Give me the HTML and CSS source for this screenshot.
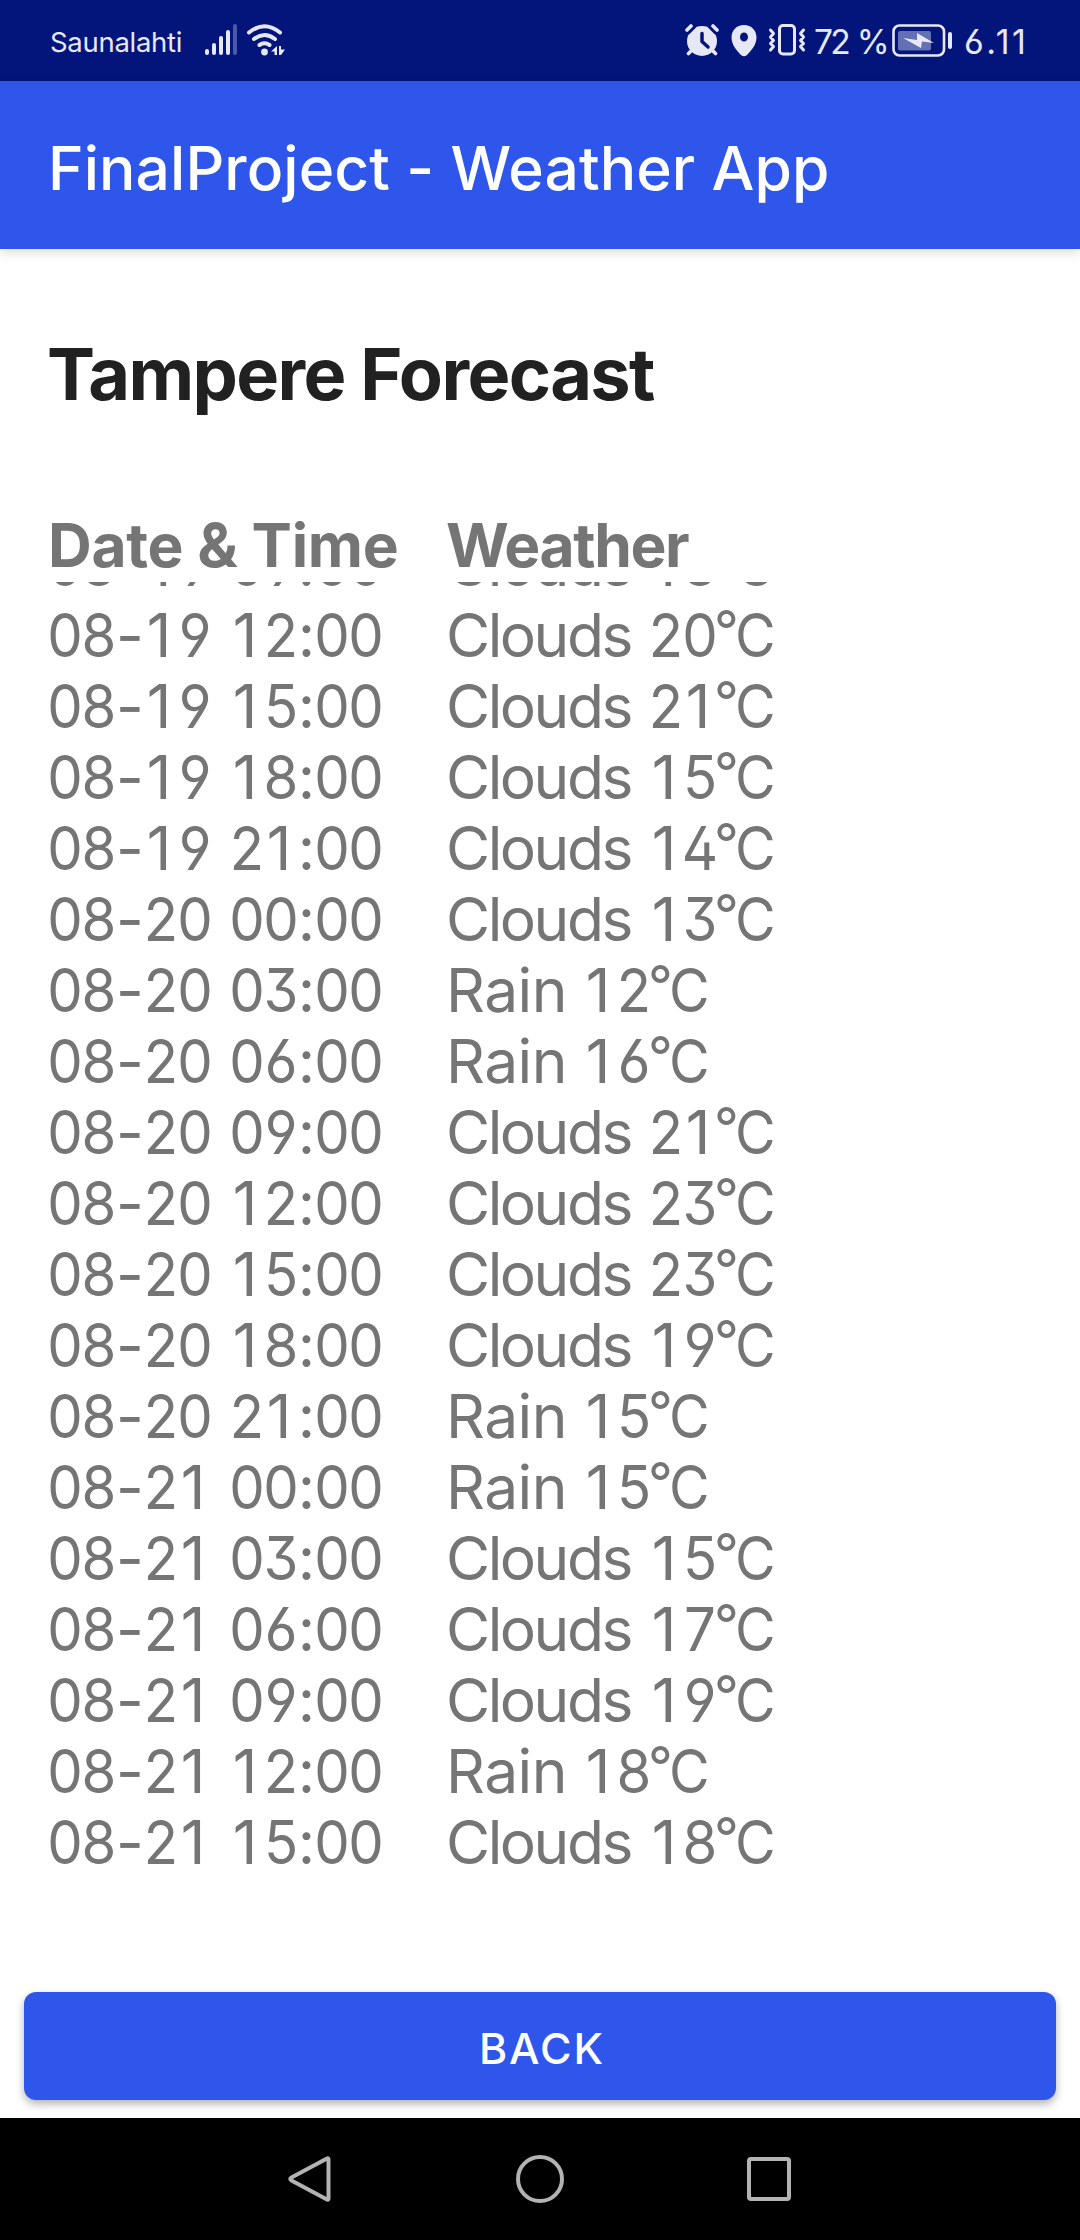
FILE: index.html
```html
<!DOCTYPE html>
<html lang="en">
<head>
<meta charset="utf-8">
<title>FinalProject - Weather App</title>
<link rel="stylesheet" href="styles.css">
</head>
<body>
<header class="status">
  <span class="carrier">Saunalahti</span>
  <svg class="signal" width="34" height="32" viewBox="0 0 34 32">
    <g fill="#e6e8f6"><rect x="1" y="25" width="4" height="6" rx="2"/><rect x="8" y="19" width="4" height="12" rx="2"/><rect x="15" y="12" width="4" height="19" rx="2"/><rect x="22" y="6" width="4" height="25" rx="2"/></g>
    <rect x="29" y="0" width="4" height="31" rx="2" fill="#4b57a8"/>
  </svg>
  <svg class="wifi" width="40" height="32" viewBox="0 0 40 32">
    <g fill="none" stroke="#e6e8f6" stroke-width="4" stroke-linecap="round"><path d="M3 8.500Q18.500-4 34 8.500M8 15Q18.500 7 29 15M13.500 21Q18.500 17.500 23.500 21"/></g>
    <circle cx="18.500" cy="28" r="3.400" fill="#e6e8f6"/>
    <path d="M31 22v9h-2.500v-3.500H25zM33 31v-9h2v3.500h4L35 31z" fill="#e6e8f6"/>
  </svg>
  <span class="spacer"></span>
  <svg class="alarm" width="34" height="32" viewBox="0 0 34 32">
    <circle cx="17" cy="17" r="15" fill="#e6e8f6"/>
    <path d="M2 7l5-5M32 7l-5-5" stroke="#03147a" stroke-width="8" stroke-linecap="round"/>
    <path d="M2 6l4-4M32 6l-4-4M6 27l-2.500 2.500M28 27l2.500 2.500" stroke="#e6e8f6" stroke-width="3.600" stroke-linecap="round"/>
    <path d="M17 9.500v8l6 5.500" fill="none" stroke="#03147a" stroke-width="3.500" stroke-linecap="round" stroke-linejoin="round"/>
  </svg>
  <svg class="pin" width="26" height="32" viewBox="0 0 26 32"><path fill="#e6e8f6" fill-rule="evenodd" d="M13 0C5.500 0 .5 5.500.5 12.500c0 7 5 13 9.500 17.500q3 2.500 6 0c4.500-4.500 9.500-10.500 9.500-17.500C25.500 5.500 20.500 0 13 0zm0 7.500a4 4.500 0 1 1 0 9 4 4.500 0 0 1 0-9z"/></svg>
  <svg class="vibrate" width="38" height="32" viewBox="0 0 38 32"><g fill="none" stroke="#e6e8f6" stroke-width="3" stroke-linecap="round" stroke-linejoin="round"><rect x="11.500" y="1.500" width="15" height="28.500" rx="3.500"/><path d="M2.500 6l3 3.500-3 3.500 3 3.500-3 3 3 3-3 3.500M35.500 6l-3 3.500 3 3.500-3 3.500 3 3-3 3 3 3.500"/></g></svg>
  <span class="percent">72 %</span>
  <svg class="battery" width="61" height="33" viewBox="0 0 61 33">
    <rect x="1.500" y="1.500" width="50.500" height="30" rx="6" fill="none" stroke="#e6e8f6" stroke-width="2.600"/>
    <rect x="6" y="7" width="33" height="19.500" rx="2" fill="#6470b5"/>
    <path d="M11 14l14 2V9l17 10-12-1.500-1 6.500z" fill="#e6e8f6"/>
    <rect x="56" y="8" width="4" height="17" rx="2" fill="#e6e8f6"/>
  </svg>
  <span class="clock">6.11</span>
</header>
<div class="toolbar"><span class="app-title">FinalProject - Weather App</span></div>
<main class="content">
  <h1>Tampere Forecast</h1>
  <div class="heads"><span class="head-date">Date &amp; Time</span><span class="head-weather">Weather</span></div>
  <div class="list" id="list"></div>
  <button class="back">BACK</button>
</main>
<nav class="navbar">
  <svg width="50" height="50" viewBox="0 0 50 50"><path d="M42.500 5.500v39q0 2-2 .8L5.500 26.500q-2.500-1.500 0-3L40.500 4.700q2-1.200 2 .8z"/></svg>
  <svg width="50" height="50" viewBox="0 0 50 50"><circle cx="25" cy="25" r="22"/></svg>
  <svg width="50" height="50" viewBox="0 0 50 50"><rect x="5" y="5" width="40" height="40" rx="2"/></svg>
</nav>
<script src="rows.js"></script>
</body>
</html>
```
FILE: rows.js
```js
const forecast = [
  ["08-19 09:00", "Clouds", "18"], ["08-19 12:00", "Clouds", "20"], ["08-19 15:00", "Clouds", "21"],
  ["08-19 18:00", "Clouds", "15"], ["08-19 21:00", "Clouds", "14"], ["08-20 00:00", "Clouds", "13"],
  ["08-20 03:00", "Rain", "12"], ["08-20 06:00", "Rain", "16"], ["08-20 09:00", "Clouds", "21"],
  ["08-20 12:00", "Clouds", "23"], ["08-20 15:00", "Clouds", "23"], ["08-20 18:00", "Clouds", "19"],
  ["08-20 21:00", "Rain", "15"], ["08-21 00:00", "Rain", "15"], ["08-21 03:00", "Clouds", "15"],
  ["08-21 06:00", "Clouds", "17"], ["08-21 09:00", "Clouds", "19"], ["08-21 12:00", "Rain", "18"],
  ["08-21 15:00", "Clouds", "18"]
];
// Each figure and separator sits in a fixed-width cell so the columns line up.
const kinds = { "-": "dash", " ": "space", ":": "colon", "°": "deg", "1": "digit one" };
const cells = s => [...s].map(c => `<span class="${kinds[c] || "digit"}">${c}</span>`).join("");
document.getElementById("list").innerHTML = forecast.map(([when, sky, temp]) =>
  `<div class="row"><span class="when">${cells(when)}</span><span class="${sky.toLowerCase()}">${sky}</span>${cells(" " + temp + "°")}<span class="unit">C</span></div>`
).join("");
```
FILE: styles.css
```css
* { box-sizing: border-box; }
body {
  margin: 0;
  height: 2240px;
  display: flex;
  flex-direction: column;
  background: #fff;
  font-family: Inter, "Open Sans", sans-serif;
  font-feature-settings: "ss01", "cv03", "cv04";
  white-space: nowrap;
  overflow: hidden;
}
svg { flex: none; display: block; }

.status {
  height: 81px;
  flex: none;
  display: flex;
  align-items: flex-start;
  padding: 24px 0 0 50px;
  background: #03147a;
  color: #e6e8f6;
}
.carrier { width: 154px; font-size: 27.500px; line-height: 37px; letter-spacing: -0.300px; }
.wifi { margin-left: 8px; }
.spacer { flex: 1; }
.pin { margin: 1px 0 0 12px; }
.vibrate { margin: 0 8px 0 11px; }
.percent { width: 78px; font-size: 33.500px; line-height: 36px; letter-spacing: -2.700px; word-spacing: 2px; }
.clock { width: 127px; padding-left: 11px; font-size: 34px; line-height: 36px; letter-spacing: 2.500px; }

.toolbar {
  height: 168px;
  flex: none;
  display: flex;
  align-items: center;
  padding: 6px 48px 0;
  background: #2f56eb;
  color: #fff;
  box-shadow: 0 4px 10px rgba(0, 0, 0, 0.130);
}
.app-title { font-size: 60.500px; font-weight: 500; letter-spacing: 0.100px; }

.content { flex: 1; display: flex; flex-direction: column; padding: 0 24px; color: #757575; }
h1 {
  margin: 80px 23px 0;
  height: 90px;
  line-height: 90px;
  font-size: 72px;
  font-weight: 700;
  letter-spacing: -1.600px;
  color: #212121;
}
.heads {
  display: flex;
  margin: 91px 24px 0;
  height: 72px;
  line-height: 71px;
  font-size: 60.500px;
  font-weight: 700;
}
.head-date { width: 398px; letter-spacing: -0.300px; }
.head-weather { letter-spacing: -1.400px; }
.list {
  height: 1304px;
  display: flex;
  flex-direction: column;
  justify-content: flex-end;
  overflow: hidden;
  padding: 0 24px 8px;
  font-size: 60.500px;
}
.row { display: flex; flex: none; height: 71px; line-height: 71px; }
.when { display: flex; width: 398px; }
.digit, .dash, .space, .colon, .deg { display: flex; flex: none; justify-content: center; }
.digit { width: 34px; transform: scaleX(0.930); }
.one { padding-right: 4px; transform: none; }
.dash { width: 28px; }
.space { width: 18px; }
.colon { width: 17px; }
.deg { width: 19px; transform: translateY(-5px) scale(0.900); }
.clouds { width: 185px; letter-spacing: -2.500px; }
.rain { width: 119px; letter-spacing: -0.500px; }
.unit { margin-left: -1px; transform: scaleX(0.920); transform-origin: left; }

.back {
  margin: 106px 0 0;
  height: 108px;
  border: 0;
  border-radius: 12px;
  background: #2f56eb;
  color: #fff;
  font: 500 43px/1 Inter, "Open Sans", sans-serif;
  letter-spacing: 2px;
  padding: 4px 0 0 4px;
  box-shadow: 0 4px 9px rgba(0, 0, 0, 0.300);
}
.navbar {
  height: 122px;
  flex: none;
  display: flex;
  justify-content: center;
  align-items: center;
  gap: 179px;
  background: #000;
}
.navbar svg { fill: none; stroke: #b3b3b3; stroke-width: 4; }
```
